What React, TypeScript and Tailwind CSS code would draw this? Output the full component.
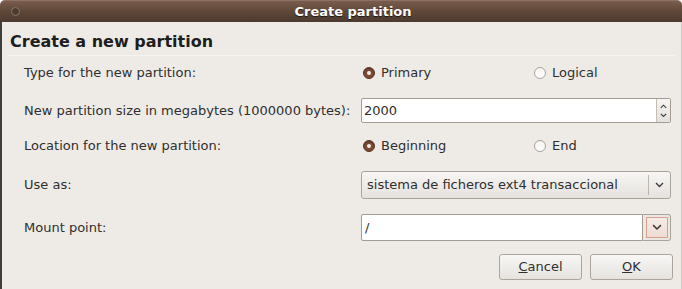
import type { ReactNode } from 'react'

const font = 'font-["DejaVu_Sans",sans-serif]'

function Radio({ checked, label, width }: { checked?: boolean; label: string; width?: string }) {
    return (
        <div className={`flex items-center gap-[6px] ${width ?? ''}`}>
            {checked ? (
                <span className="w-[12px] h-[12px] rounded-full bg-[#7a4a36] border border-[#5c3526] flex items-center justify-center shadow-[inset_0_1px_1px_rgba(0,0,0,0.3)]">
                    <span className="w-[4px] h-[4px] rounded-full bg-[#f3e9e3]" />
                </span>
            ) : (
                <span className="w-[12px] h-[12px] rounded-full bg-gradient-to-b from-[#f4f3f1] to-[#ffffff] border border-[#a8a29a]" />
            )}
            <span>{label}</span>
        </div>
    )
}

function Chevron({ up, size = 9 }: { up?: boolean; size?: number }) {
    return (
        <svg width={size} height={(size * 2) / 3} viewBox="0 0 9 6" className="block">
            <path
                d={up ? 'M1 5 L4.5 1.5 L8 5' : 'M1 1 L4.5 4.5 L8 1'}
                fill="none"
                stroke="#3c3c3c"
                strokeWidth="1.4"
            />
        </svg>
    )
}

function Row({ label, children, className }: { label: string; children: ReactNode; className: string }) {
    return (
        <div className={`flex items-center ${className}`}>
            <div className="w-[359px] pl-[22px] shrink-0 whitespace-nowrap">{label}</div>
            <div className="w-[310px] flex items-center">{children}</div>
        </div>
    )
}

export default function App() {
    return (
        <div className={`w-[682px] h-[289px] flex flex-col text-[13px] text-[#2f2f2f] ${font}`}>
            {/* Title bar */}
            <div className="h-[22px] shrink-0 flex items-center rounded-t-[5px] bg-gradient-to-b from-[#7a5d4e] via-[#5f4738] to-[#4c3a30] border-t border-[#8d7264]">
                <div className="w-[24px] flex justify-center pl-[7px]">
                    <span className="w-[9px] h-[9px] rounded-full border border-[#8a7468] bg-[#4e3b31]" />
                </div>
                <div className="flex-1 text-center font-bold text-white text-[13px] [text-shadow:0_1px_1px_rgba(0,0,0,0.7)]">
                    Create partition
                </div>
            </div>

            {/* Body */}
            <div className="flex-1 flex flex-col bg-[#eeebe7] border-l-2 border-l-[#3d3d3d] border-r border-r-[#cfcac3]">
                <h1 className="pt-[10px] pl-[8px] text-[16px] leading-[20px] font-bold text-[#1e1e1e]">Create a new partition</h1>
                <div className="mt-[3px] ml-[6px] mr-[6px] h-[1px] bg-[#cdc4ba] border-b border-[#f7f5f2]" />

                <Row label="Type for the new partition:" className="mt-[5px] h-[24px]">
                    <div className="flex items-center pl-[2px]">
                        <Radio checked label="Primary" width="w-[171px]" />
                        <Radio label="Logical" />
                    </div>
                </Row>

                <Row label="New partition size in megabytes (1000000 bytes):" className="mt-[13px] h-[25px]">
                    <div className="w-[310px] h-[25px] flex border border-[#a39c93] rounded-[2px] bg-white">
                        <div className="flex-1 flex items-center pl-[2px]">2000</div>
                        <div className="w-[14px] flex flex-col items-center justify-center gap-[4px] bg-gradient-to-b from-[#f6f5f3] to-[#e4e1dc] border-l border-[#c4beb6]">
                            <Chevron up size={7} />
                            <Chevron size={7} />
                        </div>
                    </div>
                </Row>

                <Row label="Location for the new partition:" className="mt-[11px] h-[24px]">
                    <div className="flex items-center pl-[2px]">
                        <Radio checked label="Beginning" width="w-[171px]" />
                        <Radio label="End" />
                    </div>
                </Row>

                <Row label="Use as:" className="mt-[13px] h-[28px]">
                    <div className="w-[310px] h-[28px] flex items-center rounded-[3px] border border-[#aaa39a] bg-gradient-to-b from-[#f7f6f4] to-[#e5e2de]">
                        <div className="flex-1 pl-[5px]">sistema de ficheros ext4 transaccional</div>
                        <div className="w-[1px] h-[20px] bg-[#bdb6ad]" />
                        <div className="w-[21px] flex justify-center">
                            <Chevron />
                        </div>
                    </div>
                </Row>

                <Row label="Mount point:" className="mt-[15px] h-[27px]">
                    <div className="w-[310px] h-[27px] flex">
                        <div className="flex-1 flex items-center pl-[3px] bg-white border border-[#a39c93] rounded-l-[2px]">/</div>
                        <div className="w-[28px] flex items-center justify-center border border-l-0 border-[#aaa39a] rounded-r-[3px] bg-[#ebe8e4]">
                            <div className="w-[22px] h-[21px] flex items-center justify-center border border-[#d9a08e] bg-gradient-to-b from-[#f6ebe6] to-[#eddcd4]">
                                <Chevron size={10} />
                            </div>
                        </div>
                    </div>
                </Row>

                <div className="mt-[13px] flex justify-end gap-[8px] pr-[8px]">
                    <button className="w-[83px] h-[26px] rounded-[3px] border border-[#aca59c] bg-gradient-to-b from-[#f8f7f5] to-[#e6e3df] text-[#2f2f2f]">
                        <span className="underline">C</span>ancel
                    </button>
                    <button className="w-[83px] h-[26px] rounded-[3px] border border-[#aca59c] bg-gradient-to-b from-[#f8f7f5] to-[#e6e3df] text-[#2f2f2f]">
                        <span className="underline">O</span>K
                    </button>
                </div>
            </div>
        </div>
    )
}
